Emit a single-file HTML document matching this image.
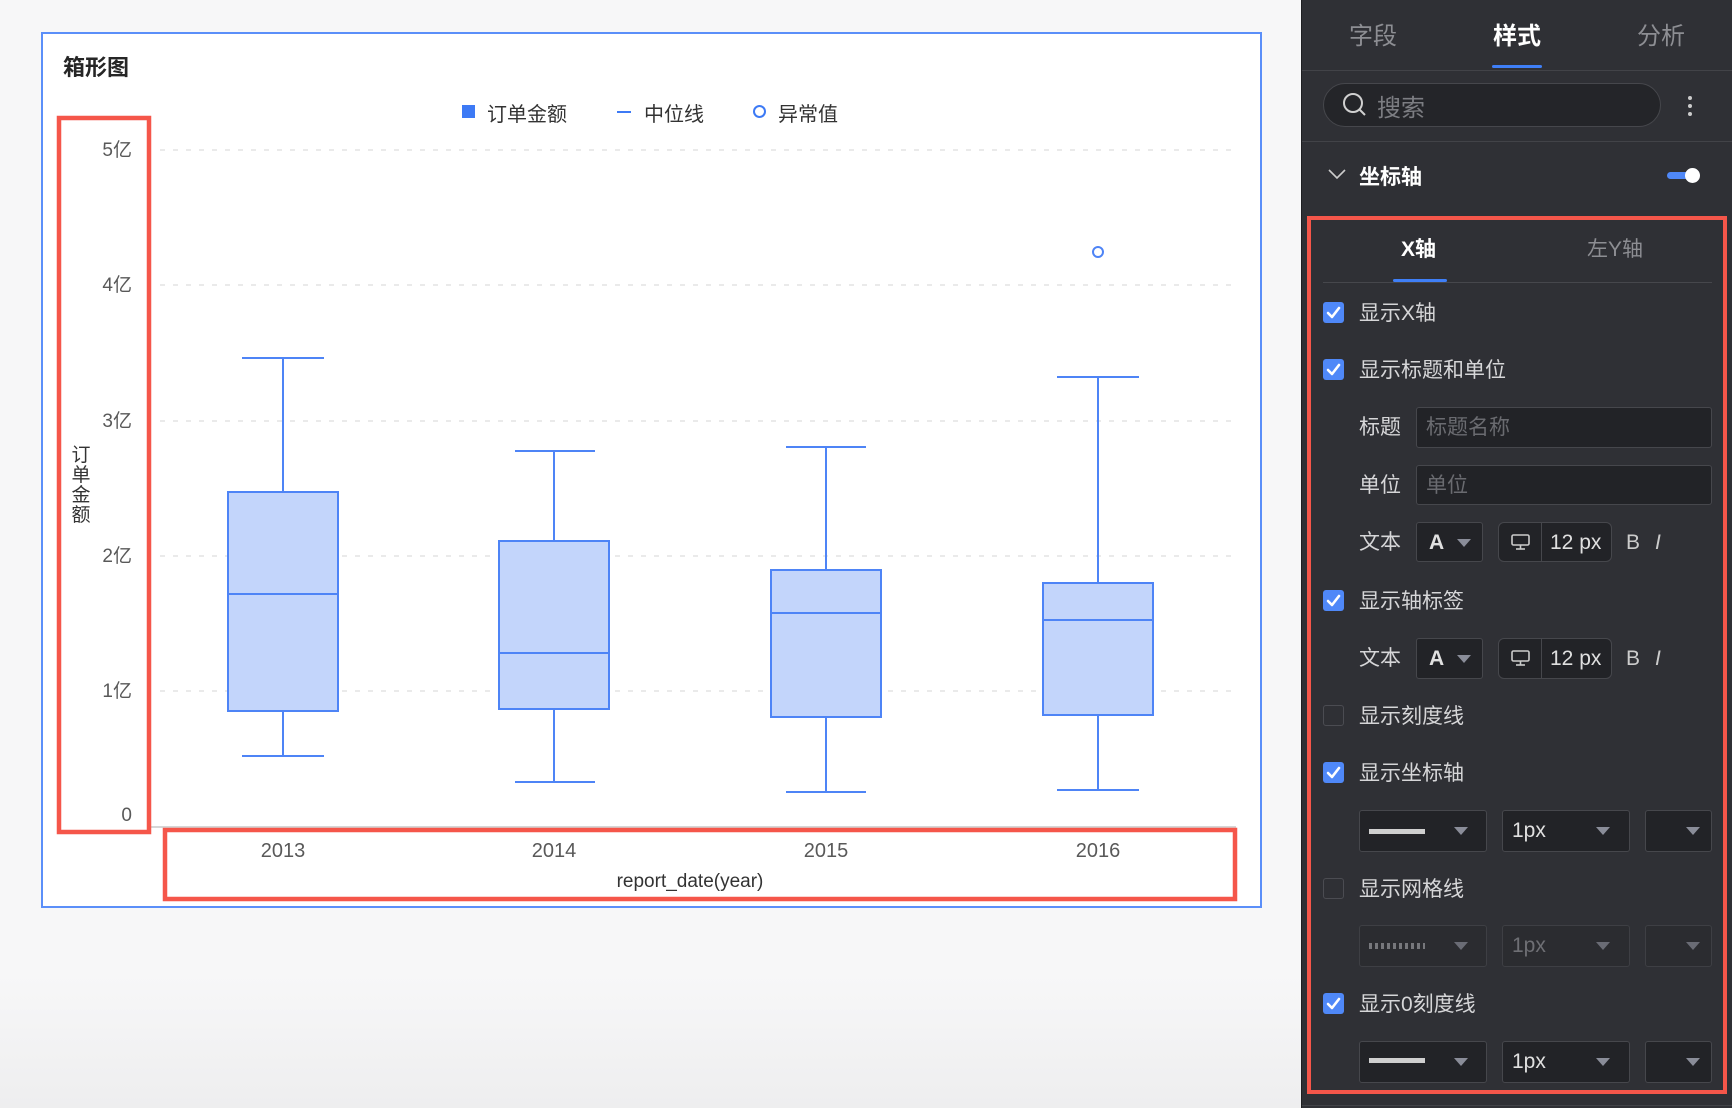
<!DOCTYPE html>
<html><head><meta charset="utf-8">
<style>
*{margin:0;padding:0;box-sizing:border-box}
body{width:1732px;height:1108px;overflow:hidden;position:relative;font-family:"Liberation Sans","Noto Sans CJK SC",sans-serif;background:linear-gradient(#f7f7f8 0%,#f7f7f8 88%,#eeeeef 100%)}
.a{position:absolute;white-space:nowrap}
.panel{position:absolute;left:1301px;top:0;width:431px;height:1108px;background:#2f3035}
.lbl{position:absolute;color:#d6d6d8;font-size:21px;line-height:24px;white-space:nowrap}
.cb{position:absolute;left:1323px;width:21px;height:21px;border-radius:3px;background:#4f88f8}
.cb.off{background:transparent;border:1px solid #4b4c52}
.inp{position:absolute;background:#222327;border:1px solid #46474c;border-radius:3px}
.arr{position:absolute;width:0;height:0;border-left:7px solid transparent;border-right:7px solid transparent;border-top:8px solid #8a8d99}
</style></head><body>
<div class="a" style="left:41px;top:32px;width:1221px;height:876px;background:#fff;border:2px solid #5b8ff9"></div>
<div class="a" style="left:63px;top:50px;font-size:22px;font-weight:bold;color:#262626">箱形图</div>
<!-- legend -->
<div class="a" style="left:462px;top:105px;width:13px;height:13px;background:#3d7af5"></div>
<div class="a" style="left:487px;top:98px;font-size:20px;color:#333">订单金额</div>
<div class="a" style="left:617px;top:111px;width:14px;height:2px;background:#3d7af5"></div>
<div class="a" style="left:644px;top:98px;font-size:20px;color:#333">中位线</div>
<div class="a" style="left:753px;top:105px;width:13px;height:13px;border:2px solid #3d7af5;border-radius:50%"></div>
<div class="a" style="left:778px;top:98px;font-size:20px;color:#333">异常值</div>
<svg class="a" style="left:0;top:0" width="1290" height="1108" font-family="Liberation Sans, Noto Sans CJK SC, sans-serif">
<g stroke="#e3e3e3" stroke-width="1.5" stroke-dasharray="5 8">
<line x1="160" x2="1236" y1="150" y2="150"/><line x1="160" x2="1236" y1="285" y2="285"/><line x1="160" x2="1236" y1="421" y2="421"/><line x1="160" x2="1236" y1="556" y2="556"/><line x1="160" x2="1236" y1="691" y2="691"/></g>
<line x1="150" x2="1236" y1="827" y2="827" stroke="#d6d6d6" stroke-width="2"/>
<g font-size="19" fill="#595959" text-anchor="end">
<text x="132" y="156">5亿</text><text x="132" y="291">4亿</text><text x="132" y="427">3亿</text><text x="132" y="562">2亿</text><text x="132" y="697">1亿</text><text x="132" y="821">0</text></g>
<g font-size="19" fill="#333" text-anchor="middle"><text x="81" y="461">订</text><text x="81" y="481">单</text><text x="81" y="501">金</text><text x="81" y="521">额</text></g>
<g font-size="20" fill="#595959" text-anchor="middle"><text x="283" y="857">2013</text><text x="554" y="857">2014</text><text x="826" y="857">2015</text><text x="1098" y="857">2016</text></g>
<text x="690" y="887" font-size="19" fill="#333" text-anchor="middle">report_date(year)</text>
<g stroke="#4e84f6" stroke-width="2" fill="#c3d5fb">
<line x1="283" x2="283" y1="358" y2="756"/><line x1="242" x2="324" y1="358" y2="358"/><line x1="242" x2="324" y1="756" y2="756"/>
<rect x="228" y="492" width="110" height="219"/><line x1="228" x2="338" y1="594" y2="594"/>
<line x1="554" x2="554" y1="451" y2="782"/><line x1="515" x2="595" y1="451" y2="451"/><line x1="515" x2="595" y1="782" y2="782"/>
<rect x="499" y="541" width="110" height="168"/><line x1="499" x2="609" y1="653" y2="653"/>
<line x1="826" x2="826" y1="447" y2="792"/><line x1="786" x2="866" y1="447" y2="447"/><line x1="786" x2="866" y1="792" y2="792"/>
<rect x="771" y="570" width="110" height="147"/><line x1="771" x2="881" y1="613" y2="613"/>
<line x1="1098" x2="1098" y1="377" y2="790"/><line x1="1057" x2="1139" y1="377" y2="377"/><line x1="1057" x2="1139" y1="790" y2="790"/>
<rect x="1043" y="583" width="110" height="132"/><line x1="1043" x2="1153" y1="620" y2="620"/>
<circle cx="1098" cy="252" r="5" fill="#fff"/></g>
<rect x="59" y="118" width="90" height="714" fill="none" stroke="#f5564a" stroke-width="4.5"/>
<rect x="165" y="830" width="1070" height="69" fill="none" stroke="#f5564a" stroke-width="4.5"/>
</svg>

<div class="panel"></div>
<div class="a" style="left:1301px;top:0;width:1px;height:1108px;background:#1e1f22"></div>
<div class="a" style="left:1349px;top:16px;font-size:24px;color:#8d8e93">字段</div>
<div class="a" style="left:1493px;top:16px;font-size:24px;color:#fff;font-weight:bold">样式</div>
<div class="a" style="left:1637px;top:16px;font-size:24px;color:#8d8e93">分析</div>
<div class="a" style="left:1492px;top:65px;width:50px;height:3px;background:#3f7ff7;border-radius:2px"></div>
<div class="a" style="left:1302px;top:70px;width:430px;height:1px;background:#424348"></div>
<div class="a" style="left:1323px;top:83px;width:338px;height:44px;border-radius:22px;background:#242529;border:1px solid #46474c"></div>
<svg class="a" style="left:1342px;top:92px" width="26" height="26"><circle cx="11" cy="11" r="9" fill="none" stroke="#d0d0d0" stroke-width="2"/><line x1="17.5" y1="17.5" x2="23" y2="23" stroke="#d0d0d0" stroke-width="2"/></svg>
<div class="a" style="left:1377px;top:88px;font-size:24px;color:#7c7d82">搜索</div>
<div class="a" style="left:1688px;top:96px;width:4px;height:4px;border-radius:2px;background:#ccc;box-shadow:0 8px 0 #ccc,0 16px 0 #ccc"></div>
<div class="a" style="left:1302px;top:141px;width:430px;height:1px;background:#424348"></div>
<svg class="a" style="left:1327px;top:168px" width="20" height="12"><polyline points="2,2 10,10 18,2" fill="none" stroke="#ccc" stroke-width="1.6"/></svg>
<div class="a" style="left:1359px;top:161px;font-size:21px;color:#fff;font-weight:bold">坐标轴</div>
<div class="a" style="left:1667px;top:172px;width:30px;height:7px;border-radius:4px;background:#4f88f8"></div>
<div class="a" style="left:1685px;top:168px;width:15px;height:15px;border-radius:50%;background:#fff"></div>

<div class="a" style="left:1307px;top:216px;width:420px;height:878px;border:4.5px solid #f5564a"></div>
<div class="a" style="left:1401px;top:233px;font-size:21px;color:#fff;font-weight:bold">X轴</div>
<div class="a" style="left:1587px;top:233px;font-size:21px;color:#8d8e93">左Y轴</div>
<div class="a" style="left:1323px;top:282px;width:389px;height:1px;background:#46474c"></div>
<div class="a" style="left:1393px;top:279px;width:54px;height:3px;background:#3f7ff7;border-radius:2px"></div>

<svg width="0" height="0" style="position:absolute"><defs><path id="ck" d="M5 11 L9 15 L16 6" fill="none" stroke="#fff" stroke-width="2.6" stroke-linecap="round" stroke-linejoin="round"/></defs></svg>
<div class="cb" style="top:302px"><svg width="21" height="21"><use href="#ck"/></svg></div>
<div class="lbl" style="left:1359px;top:302px">显示X轴</div>
<div class="cb" style="top:359px"><svg width="21" height="21"><use href="#ck"/></svg></div>
<div class="lbl" style="left:1359px;top:359px">显示标题和单位</div>
<div class="lbl" style="left:1359px;top:416px">标题</div>
<div class="inp" style="left:1416px;top:407px;width:296px;height:41px"></div>
<div class="lbl" style="left:1426px;top:416px;color:#6a6b70">标题名称</div>
<div class="lbl" style="left:1359px;top:474px">单位</div>
<div class="inp" style="left:1416px;top:465px;width:296px;height:40px"></div>
<div class="lbl" style="left:1426px;top:474px;color:#6a6b70">单位</div>

<!-- text row 1 -->
<div class="lbl" style="left:1359px;top:531px">文本</div>
<div class="inp" style="left:1416px;top:522px;width:67px;height:40px"></div>
<div class="lbl" style="left:1429px;top:531px;font-weight:bold;color:#e0e0e0">A</div>
<div class="arr" style="left:1457px;top:539px"></div>
<div class="inp" style="left:1498px;top:522px;width:114px;height:40px;border-radius:6px"></div>
<div class="a" style="left:1541px;top:523px;width:1px;height:38px;background:#46474c"></div>
<svg class="a" style="left:1510px;top:533px" width="22" height="18"><rect x="2" y="2" width="17" height="10" rx="1.5" fill="none" stroke="#ccc" stroke-width="1.6"/><line x1="10.5" y1="12" x2="10.5" y2="16" stroke="#ccc" stroke-width="1.6"/><line x1="6" y1="16" x2="15" y2="16" stroke="#ccc" stroke-width="1.6"/></svg>
<div class="lbl" style="left:1550px;top:531px;color:#e0e0e0">12 px</div>
<div class="lbl" style="left:1626px;top:531px;color:#ccc">B</div>
<div class="lbl" style="left:1655px;top:531px;color:#ccc;font-style:italic">I</div>

<div class="cb" style="top:590px"><svg width="21" height="21"><use href="#ck"/></svg></div>
<div class="lbl" style="left:1359px;top:590px">显示轴标签</div>
<!-- text row 2 -->
<div class="lbl" style="left:1359px;top:647px">文本</div>
<div class="inp" style="left:1416px;top:638px;width:67px;height:41px"></div>
<div class="lbl" style="left:1429px;top:647px;font-weight:bold;color:#e0e0e0">A</div>
<div class="arr" style="left:1457px;top:655px"></div>
<div class="inp" style="left:1498px;top:638px;width:114px;height:41px;border-radius:6px"></div>
<div class="a" style="left:1541px;top:639px;width:1px;height:39px;background:#46474c"></div>
<svg class="a" style="left:1510px;top:649px" width="22" height="18"><rect x="2" y="2" width="17" height="10" rx="1.5" fill="none" stroke="#ccc" stroke-width="1.6"/><line x1="10.5" y1="12" x2="10.5" y2="16" stroke="#ccc" stroke-width="1.6"/><line x1="6" y1="16" x2="15" y2="16" stroke="#ccc" stroke-width="1.6"/></svg>
<div class="lbl" style="left:1550px;top:647px;color:#e0e0e0">12 px</div>
<div class="lbl" style="left:1626px;top:647px;color:#ccc">B</div>
<div class="lbl" style="left:1655px;top:647px;color:#ccc;font-style:italic">I</div>

<div class="cb off" style="top:705px"></div>
<div class="lbl" style="left:1359px;top:705px">显示刻度线</div>
<div class="cb" style="top:762px"><svg width="21" height="21"><use href="#ck"/></svg></div>
<div class="lbl" style="left:1359px;top:762px">显示坐标轴</div>
<!-- select row 1 -->
<div class="inp" style="left:1359px;top:810px;width:128px;height:42px"></div>
<div class="a" style="left:1369px;top:829px;width:56px;height:5px;background:#cfcfcf"></div>
<div class="arr" style="left:1454px;top:827px"></div>
<div class="inp" style="left:1502px;top:810px;width:128px;height:42px"></div>
<div class="lbl" style="left:1512px;top:819px;color:#e0e0e0">1px</div>
<div class="arr" style="left:1596px;top:827px"></div>
<div class="inp" style="left:1645px;top:810px;width:67px;height:42px"></div>
<div class="arr" style="left:1686px;top:827px"></div>

<div class="cb off" style="top:878px"></div>
<div class="lbl" style="left:1359px;top:878px">显示网格线</div>
<div class="inp" style="left:1359px;top:925px;width:128px;height:42px;background:#2b2c30;border-color:#3e3f44"></div>
<div class="a" style="left:1369px;top:943px;width:56px;height:6px;background:repeating-linear-gradient(90deg,#77787c 0 3px,transparent 3px 6px)"></div>
<div class="arr" style="left:1454px;top:942px;border-top-color:#6a6c75"></div>
<div class="inp" style="left:1502px;top:925px;width:128px;height:42px;background:#2b2c30;border-color:#3e3f44"></div>
<div class="lbl" style="left:1512px;top:934px;color:#6e6f74">1px</div>
<div class="arr" style="left:1596px;top:942px;border-top-color:#6a6c75"></div>
<div class="inp" style="left:1645px;top:925px;width:67px;height:42px;background:#2b2c30;border-color:#3e3f44"></div>
<div class="arr" style="left:1686px;top:942px;border-top-color:#6a6c75"></div>

<div class="cb" style="top:993px"><svg width="21" height="21"><use href="#ck"/></svg></div>
<div class="lbl" style="left:1359px;top:993px">显示0刻度线</div>
<div class="inp" style="left:1359px;top:1041px;width:128px;height:42px"></div>
<div class="a" style="left:1369px;top:1058px;width:56px;height:5px;background:#cfcfcf"></div>
<div class="arr" style="left:1454px;top:1058px"></div>
<div class="inp" style="left:1502px;top:1041px;width:128px;height:42px"></div>
<div class="lbl" style="left:1512px;top:1050px;color:#e0e0e0">1px</div>
<div class="arr" style="left:1596px;top:1058px"></div>
<div class="inp" style="left:1645px;top:1041px;width:67px;height:42px"></div>
<div class="arr" style="left:1686px;top:1058px"></div>
<div class="a" style="left:1302px;top:1105px;width:430px;height:1px;background:#424348"></div>
</body></html>
